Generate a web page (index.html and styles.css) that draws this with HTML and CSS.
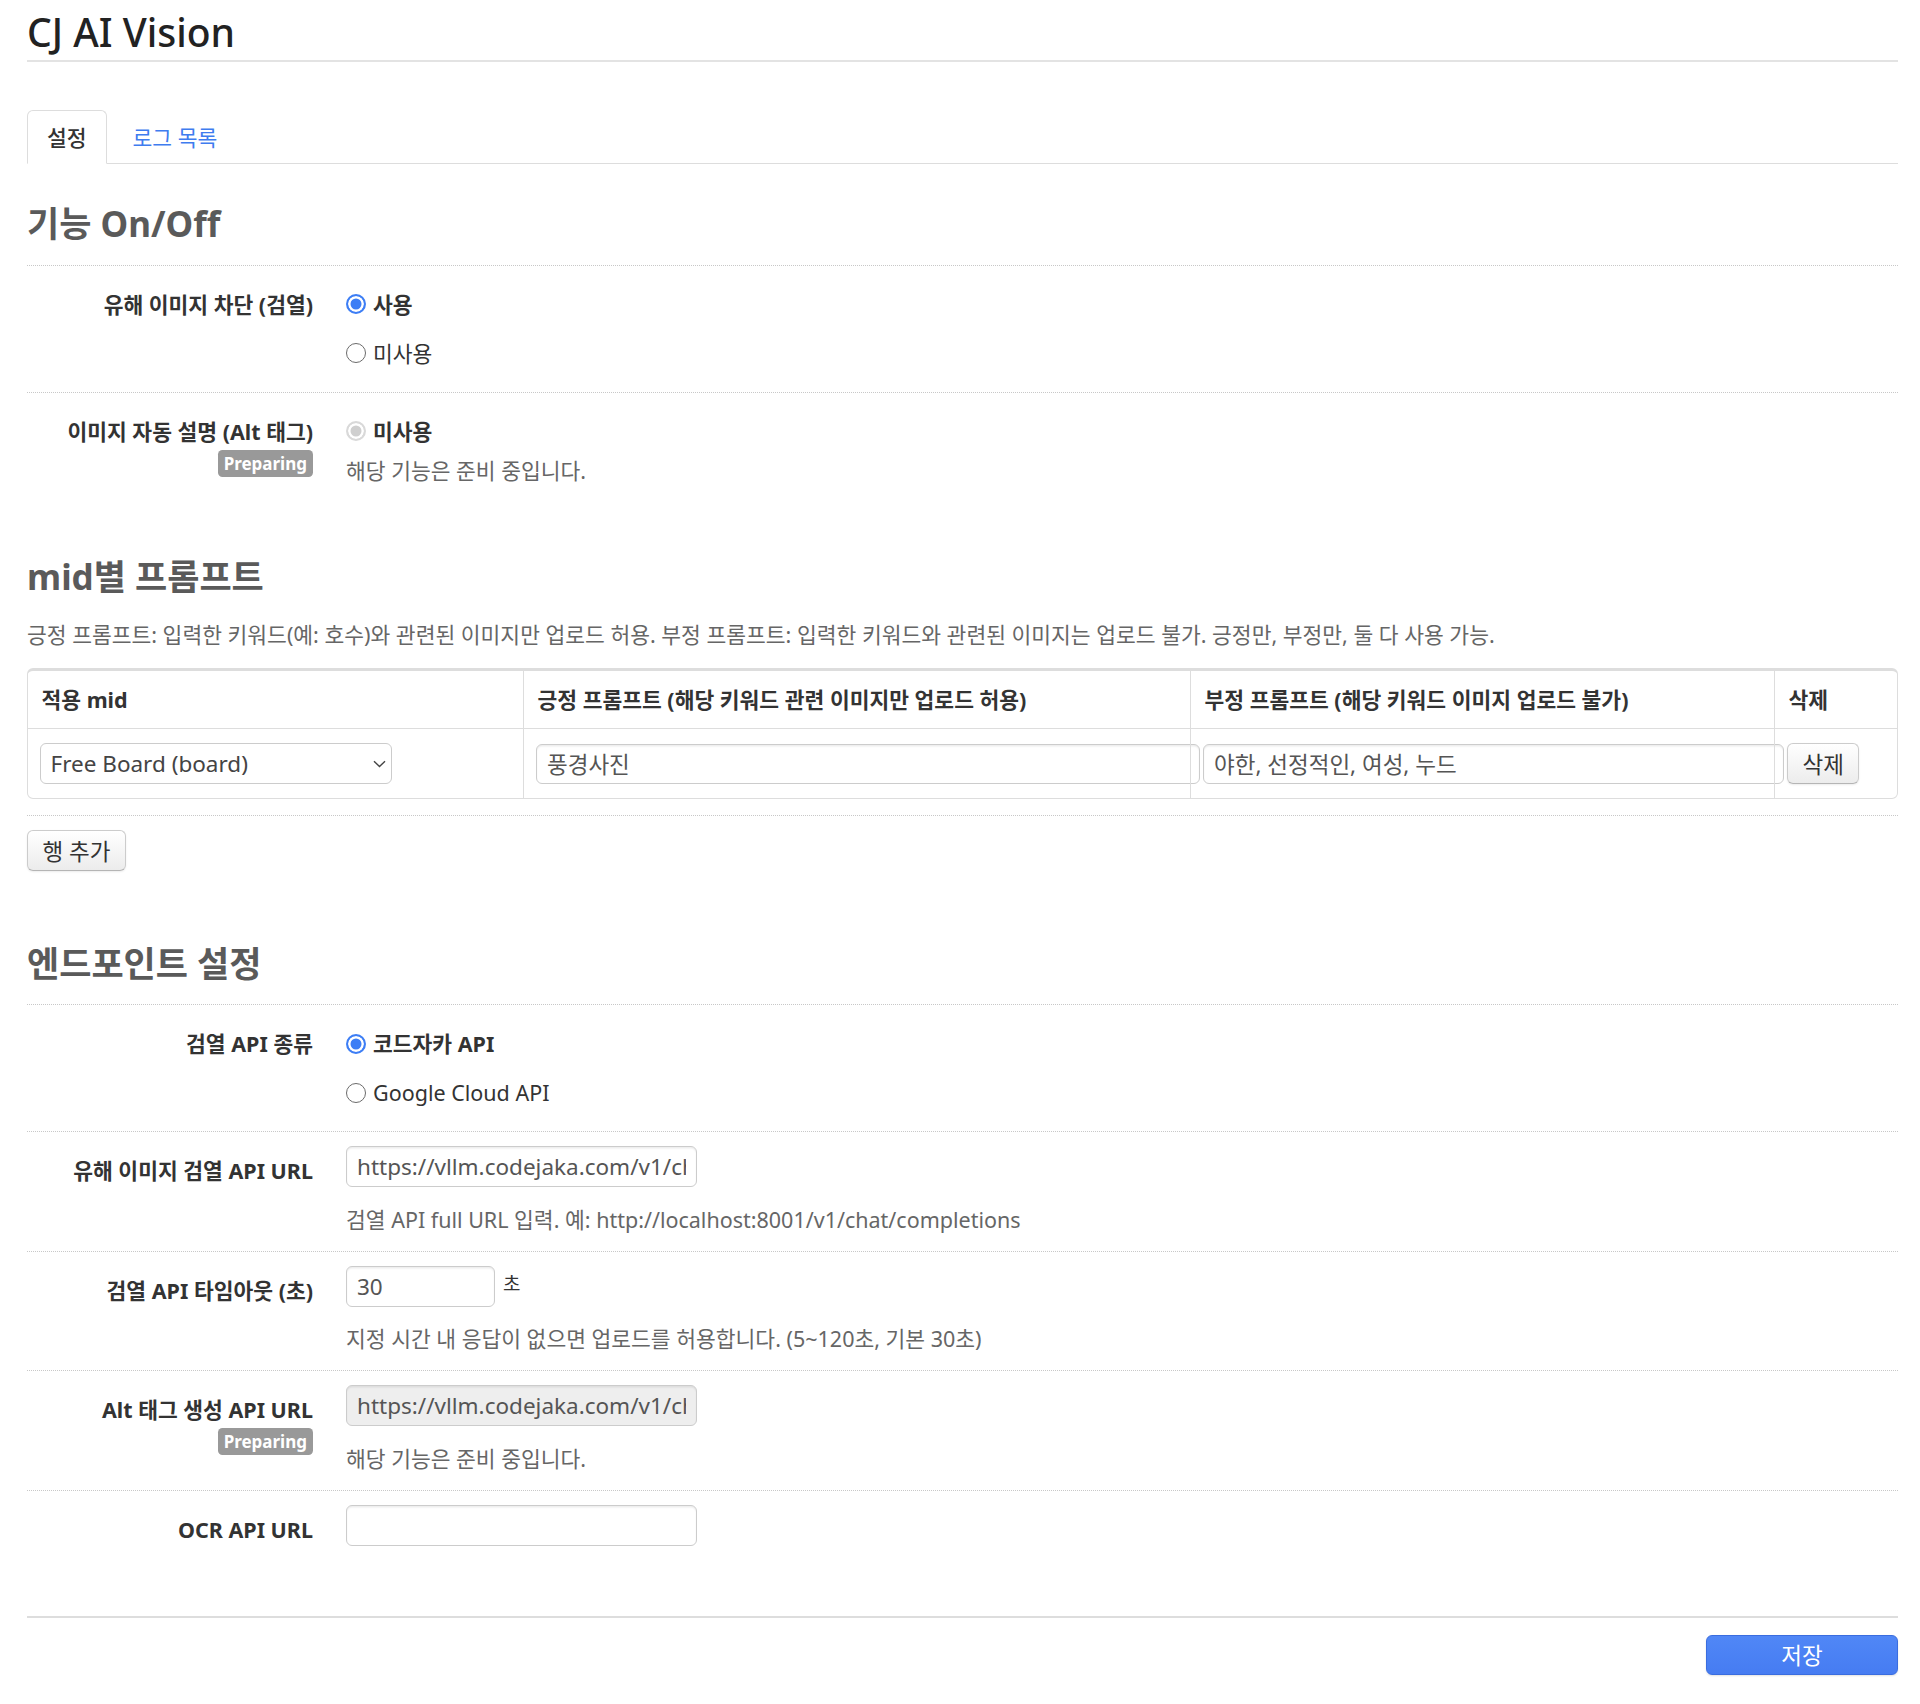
FILE: index.html
```html
<!DOCTYPE html>
<html lang="ko">
<head>
<meta charset="utf-8">
<title>CJ AI Vision</title>
<link rel="stylesheet" href="styles.css">
</head>
<body>
<div class="page">
  <h1 class="page-title">CJ AI Vision</h1>

  <ul class="tabs">
    <li class="tab tab-active">설정</li>
    <li class="tab"><a href="#" class="tab-link">로그 목록</a></li>
  </ul>

  <form class="settings">
    <section class="section section-first">
      <h2 class="section-title">기능 On/Off</h2>

      <div class="ctrl">
        <div class="ctrl-label"><span>유해 이미지 차단 (검열)</span></div>
        <div class="ctrl-body">
          <label class="opt opt-on"><input type="radio" name="censor" class="radio" checked> 사용</label>
          <label class="opt"><input type="radio" name="censor" class="radio"> 미사용</label>
        </div>
      </div>

      <div class="ctrl">
        <div class="ctrl-label"><span>이미지 자동 설명 (Alt 태그)</span><span class="badge">Preparing</span></div>
        <div class="ctrl-body">
          <label class="opt opt-on"><input type="radio" name="alt" class="radio" checked disabled> 미사용</label>
          <p class="help help-tight">해당 기능은 준비 중입니다.</p>
        </div>
      </div>
    </section>

    <section class="section">
      <h2 class="section-title">mid별 프롬프트</h2>
      <p class="desc">긍정 프롬프트: 입력한 키워드(예: 호수)와 관련된 이미지만 업로드 허용. 부정 프롬프트: 입력한 키워드와 관련된 이미지는 업로드 불가. 긍정만, 부정만, 둘 다 사용 가능.</p>

      <table class="prompt-table">
        <colgroup>
          <col class="col-mid">
          <col class="col-pos">
          <col class="col-neg">
          <col class="col-del">
        </colgroup>
        <thead>
          <tr>
            <th>적용 mid</th>
            <th>긍정 프롬프트 (해당 키워드 관련 이미지만 업로드 허용)</th>
            <th>부정 프롬프트 (해당 키워드 이미지 업로드 불가)</th>
            <th>삭제</th>
          </tr>
        </thead>
        <tbody>
          <tr>
            <td>
              <div class="select-wrap">
                <select class="select"><option>Free Board (board)</option></select>
                <svg class="chev" width="13" height="8" viewBox="0 0 13 8"><path d="M1 1.2 L6.5 6.6 L12 1.2" fill="none" stroke="#444" stroke-width="1.4"/></svg>
              </div>
            </td>
            <td><input type="text" class="text-in table-in" value="풍경사진"></td>
            <td><input type="text" class="text-in table-in" value="야한, 선정적인, 여성, 누드"></td>
            <td><button type="button" class="btn">삭제</button></td>
          </tr>
        </tbody>
      </table>

      <div class="row-add">
        <button type="button" class="btn">행 추가</button>
      </div>
    </section>

    <section class="section">
      <h2 class="section-title">엔드포인트 설정</h2>

      <div class="ctrl">
        <div class="ctrl-label"><span>검열 API 종류</span></div>
        <div class="ctrl-body">
          <label class="opt opt-on"><input type="radio" name="api" class="radio" checked> 코드자카 API</label>
          <label class="opt"><input type="radio" name="api" class="radio"> Google Cloud API</label>
        </div>
      </div>

      <div class="ctrl">
        <div class="ctrl-label"><span>유해 이미지 검열 API URL</span></div>
        <div class="ctrl-body">
          <input type="text" class="text-in url-in" value="https://vllm.codejaka.com/v1/chat/completions">
          <p class="help">검열 API full URL 입력. 예: http://localhost:8001/v1/chat/completions</p>
        </div>
      </div>

      <div class="ctrl">
        <div class="ctrl-label"><span>검열 API 타임아웃 (초)</span></div>
        <div class="ctrl-body">
          <div class="inline">
            <input type="text" class="text-in num-in" value="30">
            <span class="unit">초</span>
          </div>
          <p class="help">지정 시간 내 응답이 없으면 업로드를 허용합니다. (5~120초, 기본 30초)</p>
        </div>
      </div>

      <div class="ctrl">
        <div class="ctrl-label"><span>Alt 태그 생성 API URL</span><span class="badge">Preparing</span></div>
        <div class="ctrl-body">
          <input type="text" class="text-in url-in" value="https://vllm.codejaka.com/v1/chat/completions" disabled>
          <p class="help">해당 기능은 준비 중입니다.</p>
        </div>
      </div>

      <div class="ctrl">
        <div class="ctrl-label"><span>OCR API URL</span></div>
        <div class="ctrl-body">
          <input type="text" class="text-in url-in" value="">
        </div>
      </div>
    </section>

    <div class="actions">
      <button type="submit" class="btn-primary">저장</button>
    </div>
  </form>
</div>
</body>
</html>
```

FILE: styles.css
```css
* { box-sizing: border-box; }

html, body {
  margin: 0;
  padding: 0;
  background: #fff;
}

body {
  font-family: "Noto Sans", "Noto Sans CJK KR", sans-serif;
  font-size: 21.5px;
  line-height: 29px;
  color: #333;
}

.page {
  padding: 0 22px 29px 27px;
}

.page-title {
  margin: 0;
  padding: 5px 0 2px;
  font-size: 39px;
  line-height: 53px;
  font-weight: 500;
  color: #222;
  border-bottom: 2px solid #e3e3e3;
}

/* tabs */
.tabs {
  list-style: none;
  margin: 48px 0 0;
  padding: 0;
  display: flex;
  gap: 6px;
  border-bottom: 1px solid #ddd;
}

.tab {
  height: 54px;
  padding: 12px 19px 0;
  margin-bottom: -1px;
  border: 1px solid transparent;
  border-radius: 6px 6px 0 0;
  line-height: 29px;
}

.tab-active {
  border-color: #ddd;
  border-bottom-color: #fff;
  background: #fff;
  color: #333;
  font-weight: 500;
}

.tab-link {
  color: #3f7cef;
  text-decoration: none;
}

/* sections */
.section-title {
  margin: 54.5px 0 16.5px;
  font-size: 35px;
  line-height: 48px;
  font-weight: 700;
  color: #5a5a5a;
}

.section-first .section-title {
  margin-top: 36px;
}

.desc {
  margin: 19px 0 19px;
  color: #666;
}

/* control rows */
.ctrl {
  display: grid;
  grid-template-columns: 286px 1fr;
  column-gap: 33px;
  border-top: 1px dotted #c8c8c8;
  padding: 14px 0;
}

.ctrl-label {
  display: flex;
  flex-direction: column;
  align-items: flex-end;
  padding-top: 10px;
  text-align: right;
  font-weight: 700;
  color: #333;
}

.badge {
  display: inline-block;
  margin-top: 4px;
  height: 27px;
  line-height: 27px;
  padding: 0 6px;
  border-radius: 4.5px;
  background: #999;
  color: #fff;
  font-size: 17px;
  font-weight: 700;
}

.ctrl-body {
  min-width: 0;
}

.opt {
  display: flex;
  align-items: center;
  gap: 7px;
  height: 49px;
  color: #333;
}

.opt-on {
  font-weight: 700;
}

.radio {
  appearance: none;
  -webkit-appearance: none;
  margin: 0;
  width: 20px;
  height: 20px;
  border-radius: 50%;
  border: 1.5px solid #6b6b6b;
  background: #fff;
  flex: none;
}

.radio:checked {
  border: 2px solid #3d7ef5;
  background: #3d7ef5;
  box-shadow: inset 0 0 0 2.5px #fff;
}

.radio:checked:disabled {
  border-color: #d9d9d9;
  background: #cfcfcf;
}

.help {
  margin: 17.5px 0 3px;
  color: #666;
}

.help-tight {
  margin: 0;
}

/* inputs */
.text-in {
  height: 41px;
  padding: 0 10px;
  border: 1.5px solid #ccc;
  border-radius: 6px;
  background: #fff;
  box-shadow: inset 0 1.5px 1.5px rgba(0, 0, 0, 0.075);
  font-family: inherit;
  font-size: 22.5px;
  color: #555;
  outline: none;
}

.text-in:disabled {
  background: #eee;
  color: #555;
}

.url-in {
  width: 351px;
}

.num-in {
  width: 149px;
}

.inline {
  display: flex;
  align-items: flex-start;
  gap: 8px;
}

.unit {
  padding-top: 4px;
  line-height: 29px;
  font-size: 19px;
  color: #333;
}

/* table */
.prompt-table {
  width: 100%;
  table-layout: fixed;
  border-collapse: separate;
  border-spacing: 0;
  border: 1.5px solid #ddd;
  border-top-width: 3px;
  border-radius: 6px;
}

.col-mid { width: 495px; }
.col-pos { width: 667px; }
.col-neg { width: 584px; }

.prompt-table th {
  padding: 14px 13.5px;
  text-align: left;
  font-weight: 700;
  color: #333;
  border-bottom: 1.5px solid #ddd;
}

.prompt-table td {
  padding: 14px 12px;
  vertical-align: middle;
}

.prompt-table th + th,
.prompt-table td + td {
  border-left: 1.5px solid #ddd;
}

.prompt-table td:first-child {
  padding-left: 11.5px;
}

.table-in {
  box-sizing: content-box;
  width: 100%;
  height: 38px;
  padding: 0 10px;
  display: block;
}

.select-wrap {
  position: relative;
  width: 352px;
}

.select {
  appearance: none;
  -webkit-appearance: none;
  display: block;
  width: 352px;
  height: 41px;
  padding: 0 34px 0 10px;
  border: 1.5px solid #ccc;
  border-radius: 6px;
  background: #fff;
  font-family: inherit;
  font-size: 22.5px;
  color: #444;
}

.chev {
  position: absolute;
  right: 6px;
  top: 17px;
  pointer-events: none;
}

/* buttons */
.btn {
  height: 41px;
  padding: 0 14.5px;
  border: 1.5px solid #ccc;
  border-bottom-color: #b5b5b5;
  border-radius: 6px;
  background: linear-gradient(#ffffff, #ececec);
  box-shadow: 0 1px 2px rgba(0, 0, 0, 0.08);
  font-family: inherit;
  font-size: 22.5px;
  color: #333;
  cursor: pointer;
}

.row-add {
  margin-top: 16px;
  padding: 14px 0;
  border-top: 1px dotted #c8c8c8;
}

.actions {
  margin-top: 56px;
  padding-top: 17px;
  border-top: 2px solid #ddd;
  display: flex;
  justify-content: flex-end;
}

.btn-primary {
  width: 192px;
  height: 40px;
  border: 1.5px solid #3a6ddf;
  border-radius: 6px;
  background: linear-gradient(#5087f6, #467cf2);
  color: #fff;
  font-family: inherit;
  font-size: 22.5px;
  cursor: pointer;
  box-shadow: 0 1px 2px rgba(0, 0, 0, 0.12);
}
```
